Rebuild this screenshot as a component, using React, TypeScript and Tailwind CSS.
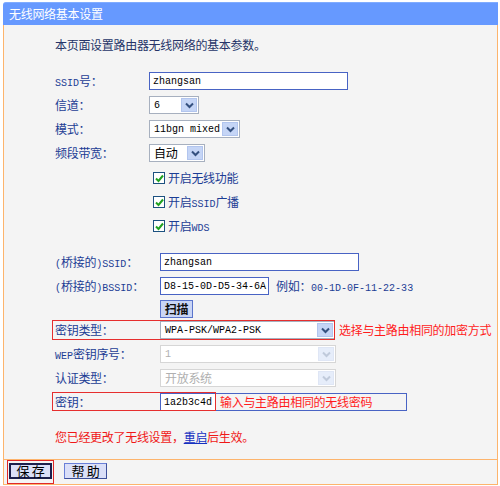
import React from "react";

function M({ children }: { children: React.ReactNode }) {
  return <span className="font-['Liberation_Mono',monospace] text-[10px] tracking-normal">{children}</span>;
}

function Chevron({ disabled }: { disabled?: boolean }) {
  return (
    <svg width="9" height="7" viewBox="0 0 9 7">
      <path d="M1 1.5 L4.5 5 L8 1.5" fill="none" stroke={disabled ? "#c0cadb" : "#34507f"} strokeWidth="2" />
    </svg>
  );
}

function Select({
  cls,
  value,
  disabled,
  mono,
}: {
  cls: string;
  value: string;
  disabled?: boolean;
  mono?: boolean;
}) {
  return (
    <div
      className={`${cls} h-[18px] flex items-stretch bg-white p-[1px] border ${
        disabled ? "border-[#d6d6d6] text-[#b0b0b0]" : "border-[#a7b0bf] text-black"
      }`}
    >
      <div className="flex-1 flex items-center pl-[3px] whitespace-nowrap">
        {mono ? <M>{value}</M> : value}
      </div>
      <div
        className={`w-[16px] shrink-0 flex items-center justify-center border ${
          disabled ? "bg-[#e6edfa] border-[#dfe6f5]" : "bg-[#c5d5f6] border-[#b2c5ee]"
        }`}
      >
        <Chevron disabled={disabled} />
      </div>
    </div>
  );
}

function Input({ cls, value }: { cls: string; value: string }) {
  return (
    <div className={`${cls} h-[18px] flex items-center bg-white border border-[#4863c4] pl-[3px] whitespace-nowrap text-black`}>
      <M>{value}</M>
    </div>
  );
}

function Check() {
  return (
    <div className="w-[12px] h-[12px] border border-[#1c5180] bg-white flex items-center justify-center">
      <svg width="9" height="9" viewBox="0 0 9 9">
        <path d="M1 4.5 L3.5 7 L8 1.5" fill="none" stroke="#21a121" strokeWidth="2" />
      </svg>
    </div>
  );
}

function Row({
  label,
  lw,
  children,
  h = "h-[24px]",
}: {
  label?: React.ReactNode;
  lw: string;
  children?: React.ReactNode;
  h?: string;
}) {
  return (
    <div className={`${h} flex items-center relative`}>
      <div className={`${lw} shrink-0 text-[#1c3d94] whitespace-nowrap`}>{label}</div>
      {children}
    </div>
  );
}

export default function App() {
  return (
    <div className="w-[500px] h-[486px] bg-white pt-[2px] pl-[3px] font-['Noto_Sans_CJK_SC',sans-serif] text-[12px] tracking-[-0.3px]">
      <div className="w-[495px]">
        <div className="h-[23px] bg-[#6699ff] border-t border-[#80acff] rounded-tl-[3px] flex items-center pl-[6px] text-white text-[12px]">
          无线网络基本设置
        </div>
        <div className="h-[435px] bg-[#f4f4f4] border-x border-b border-[#fdb46c] pl-[51px] pt-[8px]">
          <div className="h-[24px] flex items-center text-[#263468]">本页面设置路由器无线网络的基本参数。</div>

          <div className="mt-[12px]">
            <Row lw="w-[94px]" label={<><M>SSID</M>号：</>}>
              <Input cls="w-[199px]" value="zhangsan" />
            </Row>
            <Row lw="w-[94px]" label="信道：">
              <Select cls="w-[50px]" value="6" mono />
            </Row>
            <Row lw="w-[94px]" label="模式：">
              <Select cls="w-[91px]" value="11bgn mixed" mono />
            </Row>
            <Row lw="w-[94px]" label="频段带宽：">
              <Select cls="w-[56px]" value="自动" />
            </Row>
          </div>

          <div className="mt-[1px]">
            <div className="h-[24px] flex items-center pl-[98px] gap-[3px] text-[#1c3d94]">
              <Check />
              <span>开启无线功能</span>
            </div>
            <div className="h-[24px] flex items-center pl-[98px] gap-[3px] text-[#1c3d94]">
              <Check />
              <span>开启<M>SSID</M>广播</span>
            </div>
            <div className="h-[24px] flex items-center pl-[98px] gap-[3px] text-[#1c3d94]">
              <Check />
              <span>开启<M>WDS</M></span>
            </div>
          </div>

          <div className="mt-[12px]">
            <Row lw="w-[105px]" label={<><M>(</M>桥接的<M>)SSID</M>：</>}>
              <Input cls="w-[199px]" value="zhangsan" />
            </Row>
            <Row lw="w-[105px]" label={<><M>(</M>桥接的<M>)BSSID</M>：</>}>
              <Input cls="w-[109px]" value="D8-15-0D-D5-34-6A" />
              <span className="ml-[7px] text-[#1c3d94] whitespace-nowrap">
                例如：<M>00-1D-0F-11-22-33</M>
              </span>
            </Row>
            <Row lw="w-[105px]" h="h-[20px]">
              <div className="w-[33px] h-[18px] mt-[1px] flex items-center justify-center bg-[#c9d5f5] border border-[#5a74cc] text-[#111] font-bold text-[12px]">
                扫描
              </div>
            </Row>
            <Row lw="w-[105px]" label="密钥类型：">
              <Select cls="w-[175px]" value="WPA-PSK/WPA2-PSK" mono />
              <span className="ml-[4px] text-[#ff1c1c] whitespace-nowrap">选择与主路由相同的加密方式</span>
              <div className="absolute left-[-3px] top-[2px] w-[283px] h-[20px] border border-[#e62e2e] pointer-events-none" />
            </Row>
            <Row lw="w-[105px]" label={<><M>WEP</M>密钥序号：</>}>
              <Select cls="w-[176px]" value="1" mono disabled />
            </Row>
            <Row lw="w-[105px]" label="认证类型：">
              <Select cls="w-[176px]" value="开放系统" disabled />
            </Row>
            <Row lw="w-[105px]" label="密钥：">
              <div className="w-[247px] h-[18px] flex items-stretch border border-[#4863c4]">
                <div className="w-[55px] bg-white flex items-center pl-[3px] text-black">
                  <M>1a2b3c4d</M>
                </div>
                <div className="flex-1 flex items-center pl-[4px] text-[#ff1c1c] whitespace-nowrap">
                  输入与主路由相同的无线密码
                </div>
              </div>
              <div className="absolute left-[-3px] top-[2px] w-[164px] h-[19px] border border-[#e62e2e] pointer-events-none" />
            </Row>
          </div>

          <div className="mt-[11px] h-[24px] flex items-center text-[#f01818]">
            您已经更改了无线设置，<span className="text-[#1430c0] underline">重启</span>后生效。
          </div>
        </div>

        <div className="h-[25px] bg-[#f4f4f4] border-x border-b border-[#fdb46c] flex items-start pt-[3px] pl-[5px] gap-[12px]">
          <div className="relative">
            <div className="w-[43px] h-[16px] border-2 border-[#1b1f4d] bg-[#dadff8] flex items-center justify-center text-[13px] text-black">
              保 存
            </div>
            <div className="absolute -left-[2px] -right-[2px] -top-[3px] -bottom-[5px] border border-[#e02828] pointer-events-none" />
          </div>
          <div className="w-[43px] h-[16px] border border-[#6a80d8] border-r-[#3d4f99] border-b-[#3d4f99] bg-[#dadff8] flex items-center justify-center text-[13px] text-black">
            帮 助
          </div>
        </div>
      </div>
    </div>
  );
}
